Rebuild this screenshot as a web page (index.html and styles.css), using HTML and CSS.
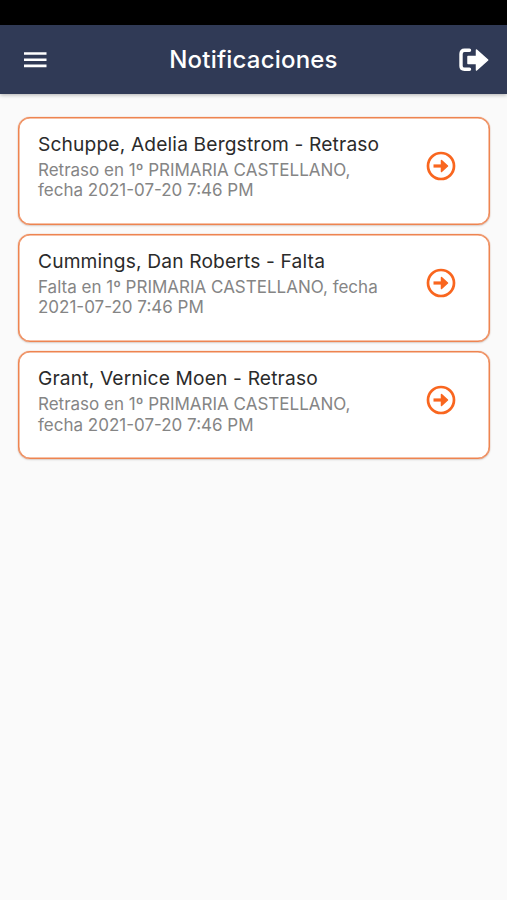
FILE: index.html
```html
<!DOCTYPE html>
<html lang="es">
<head>
  <meta charset="UTF-8">
  <meta name="viewport" content="width=device-width, initial-scale=1.0">
  <title>Notificaciones</title>
  <link rel="stylesheet" href="styles.css">
</head>
<body>
  <div class="status-bar"></div>
  <header class="app-bar">
    <svg class="menu-icon" viewBox="0 0 24 16"><path d="M1 1.500h22.500M1 7.700h22.500M1 13.900h22.500" stroke="#fff" stroke-width="2.600"/></svg>
    <h1>Notificaciones</h1>
    <svg class="exit-icon" viewBox="0 0 30 24"><path d="M10.500 2.300H5.500Q2 2.300 2 6V18Q2 21.200 5.500 21.200H10.500" fill="none" stroke="#fff" stroke-width="3.400" stroke-linecap="round"/><path d="M9 8.500h8.500V2L28.700 12 17.500 22V15.500H9z" fill="#fff" stroke="#fff" stroke-width="1.500" stroke-linejoin="round"/></svg>
  </header>
  <main class="list">
    <div class="card">
      <div class="info">
        <h2>Schuppe, Adelia Bergstrom - Retraso</h2>
        <p>Retraso en 1º PRIMARIA CASTELLANO,<br>fecha 2021-07-20 7:46 PM</p>
      </div>
      <svg class="arrow" viewBox="0 0 30 30"><circle cx="15" cy="15" r="13"/><path d="M7.500 15h8.500" stroke-width="3.200"/><path class="head" d="M15.500 9.500l6 5.500-6 5.500z"/></svg>
    </div>
    <div class="card">
      <div class="info">
        <h2>Cummings, Dan Roberts - Falta</h2>
        <p>Falta en 1º PRIMARIA CASTELLANO, fecha<br>2021-07-20 7:46 PM</p>
      </div>
      <svg class="arrow" viewBox="0 0 30 30"><circle cx="15" cy="15" r="13"/><path d="M7.500 15h8.500" stroke-width="3.200"/><path class="head" d="M15.500 9.500l6 5.500-6 5.500z"/></svg>
    </div>
    <div class="card">
      <div class="info">
        <h2>Grant, Vernice Moen - Retraso</h2>
        <p>Retraso en 1º PRIMARIA CASTELLANO,<br>fecha 2021-07-20 7:46 PM</p>
      </div>
      <svg class="arrow" viewBox="0 0 30 30"><circle cx="15" cy="15" r="13"/><path d="M7.500 15h8.500" stroke-width="3.200"/><path class="head" d="M15.500 9.500l6 5.500-6 5.500z"/></svg>
    </div>
  </main>
</body>
</html>
```
FILE: styles.css
```css
* { margin: 0; padding: 0; box-sizing: border-box; }
body { font-family: Inter, sans-serif; background-color: #fafafa; color: #2b2b2b; min-height: 100vh; }
.status-bar { height: 25px; background: #000; }
.app-bar { height: 69px; padding: 0 18px 0 24px; display: flex; align-items: center; justify-content: space-between; background: #303a56; color: #fff; box-shadow: 0 1px 4px rgba(0,0,0,0.3); }
.app-bar h1 { font-size: 24px; font-weight: 500; letter-spacing: 0.200px; }
.menu-icon { width: 24px; height: 16px; margin-left: -1px; }
.app-bar h1 { margin-left: 1px; }
.exit-icon { width: 30px; height: 24px; }
.list { padding: 23px 17px 23px 18px; display: flex; flex-direction: column; gap: 9.400px; }
.card { height: 107.800px; padding: 15px 33px 0 19px; display: flex; justify-content: space-between; background: #fff; border: 1px solid #ee8450; border-radius: 12px; box-shadow: inset 0 0 0 0.500px #ee8450, 0 0 1px #ee8450, 0 1px 2px rgba(0,0,0,0.15); }
.info { white-space: nowrap; }
.info h2 { font-size: 19.200px; font-weight: 400; line-height: 23px; letter-spacing: 0.150px; }
.info p { margin-top: 3.800px; font-size: 17px; line-height: 20.500px; color: #858585; }
.arrow { width: 30px; height: 30px; margin-top: 17.500px; flex-shrink: 0; fill: none; stroke: #f9661f; stroke-width: 2.700; }
.arrow .head { fill: #f9661f; stroke-width: 1.500; stroke-linejoin: round; }
```
